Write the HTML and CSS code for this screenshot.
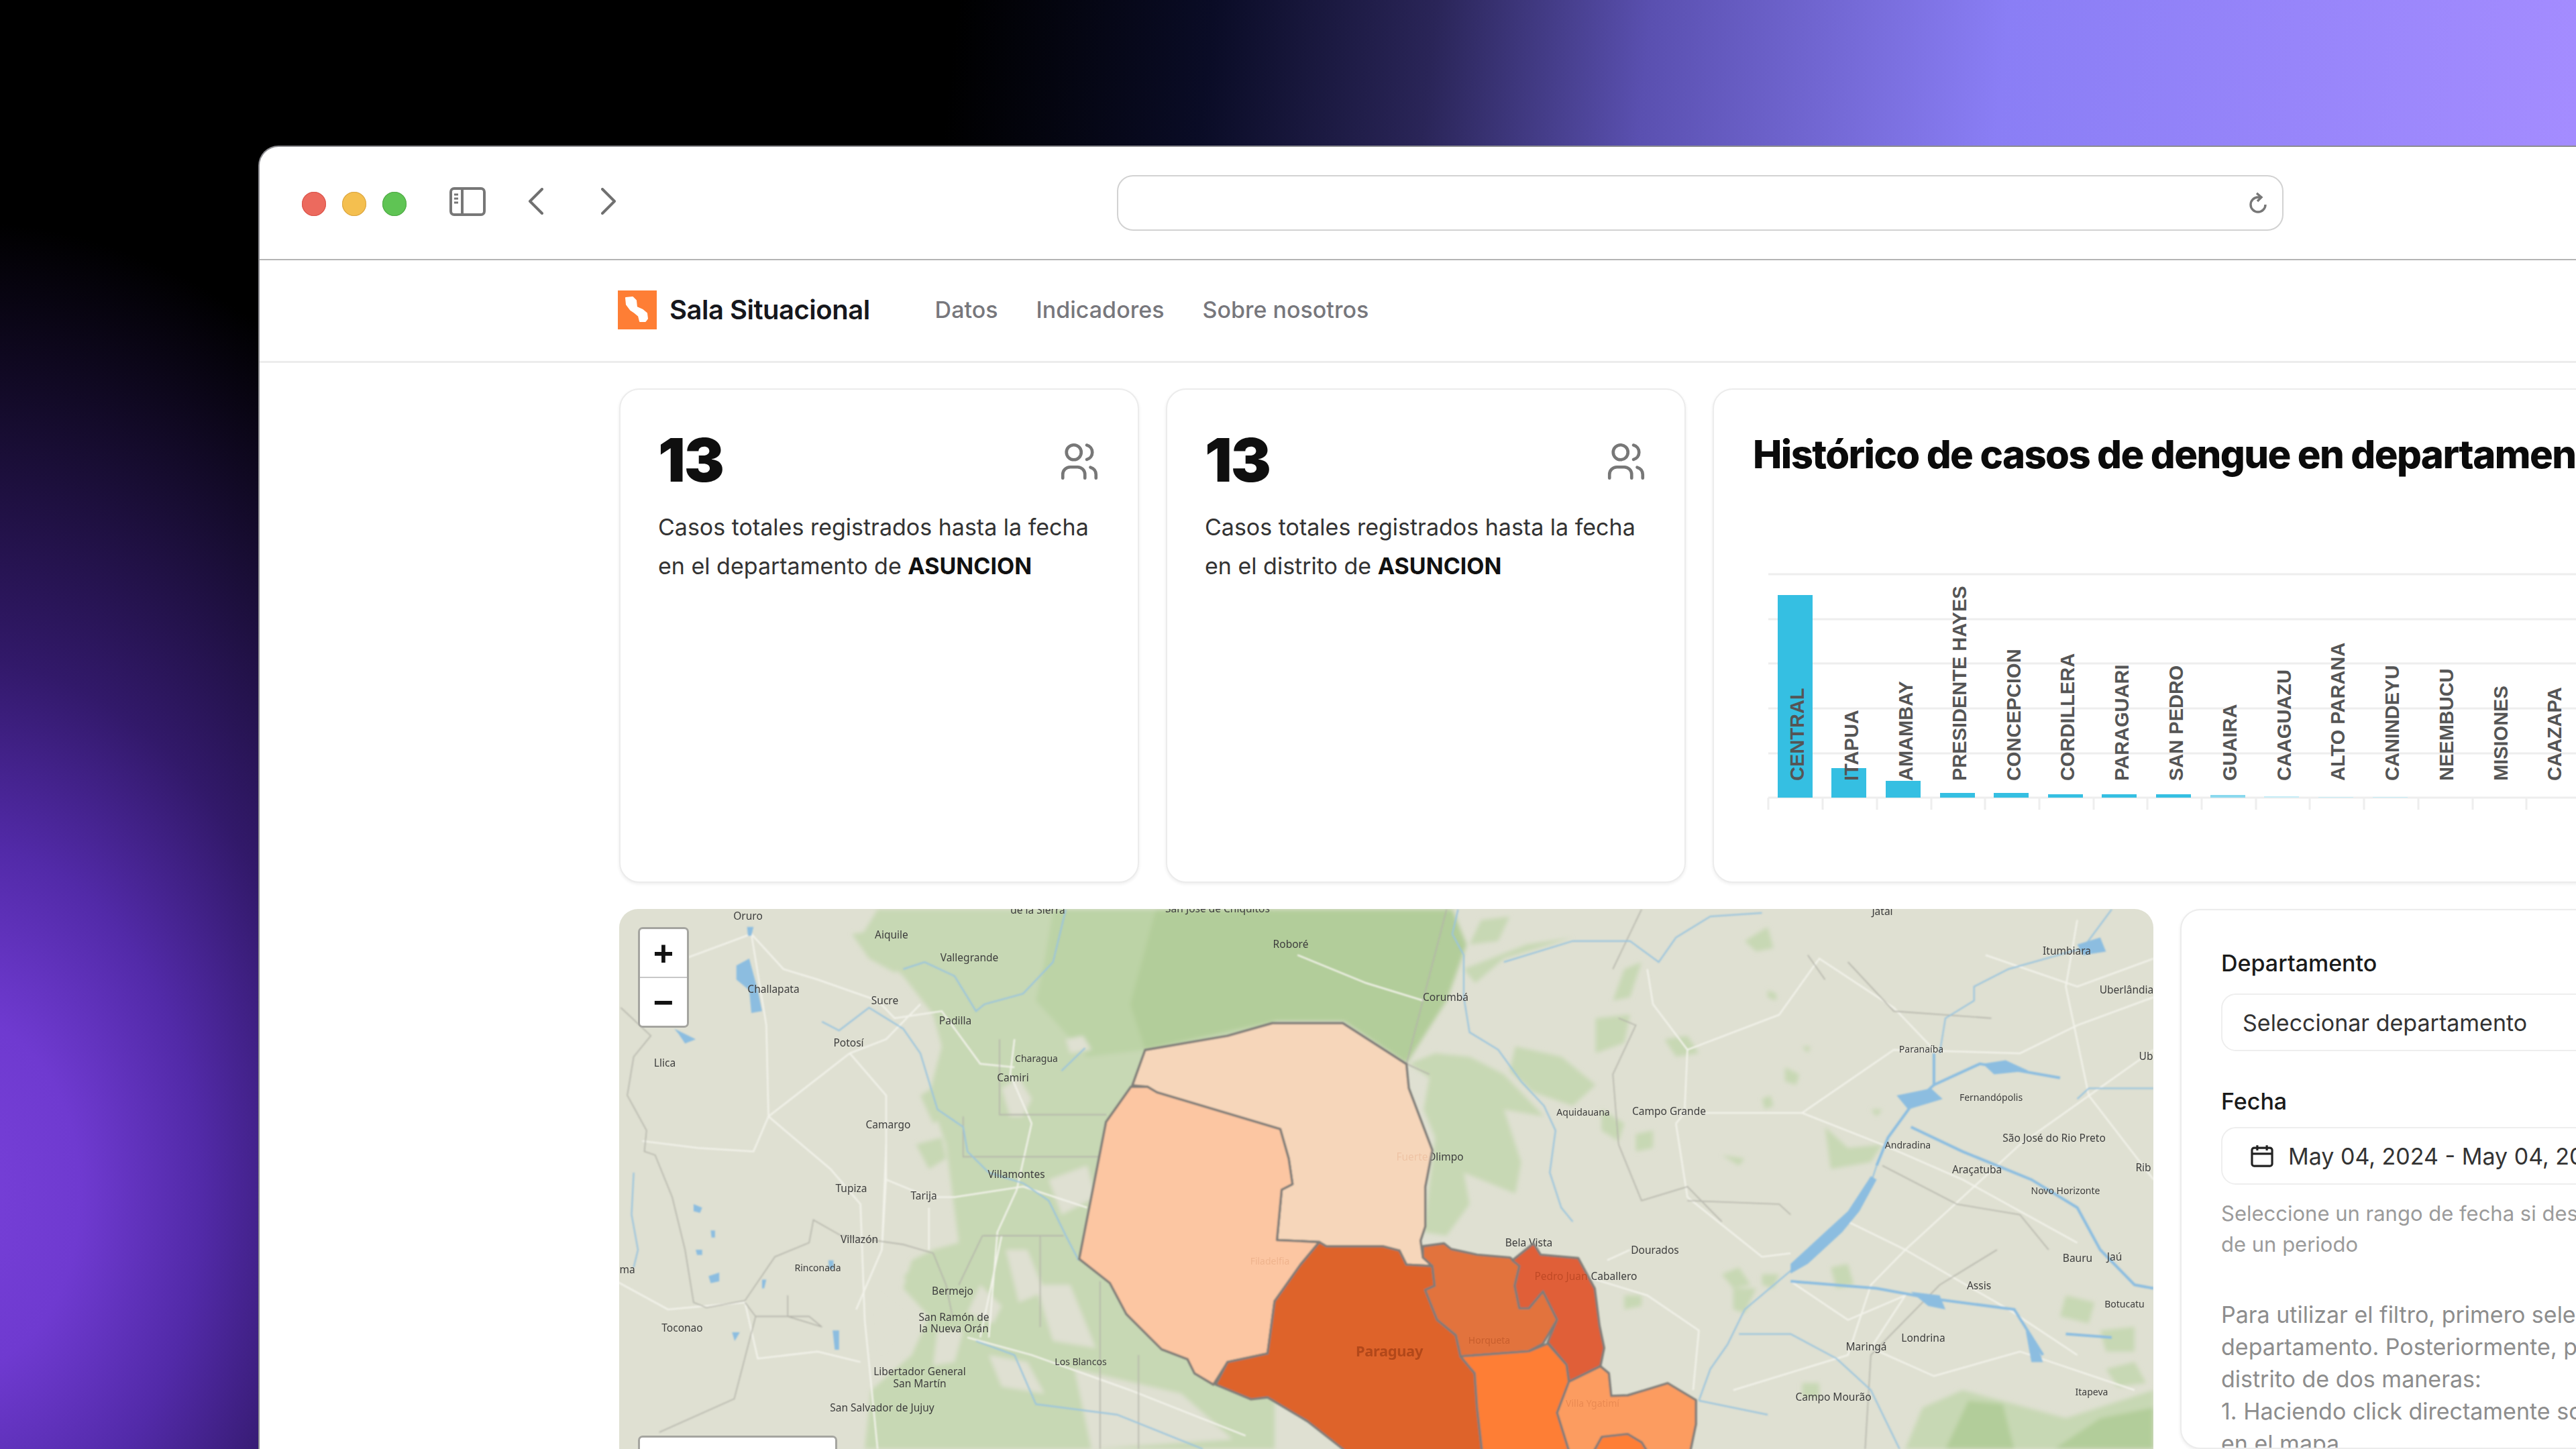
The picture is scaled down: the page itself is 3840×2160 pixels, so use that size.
FILE: index.html
```html
<!DOCTYPE html>
<html lang="es">
<head>
<meta charset="utf-8">
<title>Sala Situacional</title>
<link rel="stylesheet" href="styles.css">
</head>
<body>
<div class="window">
  <header class="toolbar">
    <div class="lights">
      <span class="light light-red"></span>
      <span class="light light-yellow"></span>
      <span class="light light-green"></span>
    </div>
    <svg class="tb-sidebar" viewBox="0 0 54 43" aria-hidden="true">
      <rect x="2" y="2" width="50" height="39" rx="5"/>
      <path d="M19 2v39"/>
      <path class="thin" d="M7 11h6M7 17h6M7 23h6"/>
    </svg>
    <svg class="tb-chev tb-back" viewBox="0 0 23 40" aria-hidden="true"><path d="M21 2 3 20l18 18"/></svg>
    <svg class="tb-chev tb-fwd" viewBox="0 0 23 40" aria-hidden="true"><path d="m2 2 18 18L2 38"/></svg>
    <div class="address">
      <svg class="reload" viewBox="0 0 28 34" aria-hidden="true">
        <path d="M24 19a11 11 0 1 1-11-11h4"/><path d="m11 2 7 6-6 6"/>
      </svg>
    </div>
  </header>

  <nav class="nav">
    <svg class="logo" viewBox="0 0 58 58" aria-hidden="true">
      <rect width="58" height="58" class="logo-bg"/>
      <path class="logo-map" d="M12 11 22 10 27 15 28 25 37 29 43 34 44 42 41 46 33 46 31 38 25 33 19 29 13 21Z"/>
    </svg>
    <span class="brand">Sala Situacional</span>
    <ul class="nav-links">
      <li>Datos</li>
      <li>Indicadores</li>
      <li>Sobre nosotros</li>
    </ul>
  </nav>

  <main class="main">
    <section class="row row-top">
      <article class="card stat">
        <div class="stat-head">
          <span class="stat-num">13</span>
          <svg class="users" viewBox="0 0 24 24" aria-hidden="true">
            <circle cx="9" cy="7" r="4"/>
            <path d="M3 21v-2a4 4 0 0 1 4-4h4a4 4 0 0 1 4 4v2"/>
            <path d="M16 3.13a4 4 0 0 1 0 7.75"/>
            <path d="M21 21v-2a4 4 0 0 0-3-3.85"/>
          </svg>
        </div>
        <p class="stat-text">Casos totales registrados hasta la fecha<br>en el departamento de <b>ASUNCION</b></p>
      </article>
      <article class="card stat">
        <div class="stat-head">
          <span class="stat-num">13</span>
          <svg class="users" viewBox="0 0 24 24" aria-hidden="true">
            <circle cx="9" cy="7" r="4"/>
            <path d="M3 21v-2a4 4 0 0 1 4-4h4a4 4 0 0 1 4 4v2"/>
            <path d="M16 3.13a4 4 0 0 1 0 7.75"/>
            <path d="M21 21v-2a4 4 0 0 0-3-3.85"/>
          </svg>
        </div>
        <p class="stat-text">Casos totales registrados hasta la fecha<br>en el distrito de <b>ASUNCION</b></p>
      </article>
      <article class="card chart-card">
        <h2 class="chart-title">Histórico de casos de dengue en departamentos</h2>
        <svg class="chart" viewBox="2556 840 1400 400" role="img" aria-label="Casos por departamento">
          <g class="grid">
            <path d="M2637 859H3956M2637 926H3956M2637 992H3956M2637 1059H3956M2637 1126H3956M2637 1192H3956"/>
            <path d="M2637 1192v18M2718 1192v18M2799 1192v18M2880 1192v18M2960 1192v18M3041 1192v18M3122 1192v18M3202 1192v18M3283 1192v18M3364 1192v18M3444 1192v18M3525 1192v18M3606 1192v18M3687 1192v18M3767 1192v18M3848 1192v18M3929 1192v18"/>
          </g>
          <g class="bars">
            <rect x="2651" y="890" width="52" height="302"/>
            <rect x="2731" y="1148" width="52" height="44"/>
            <rect x="2812" y="1167" width="52" height="25"/>
            <rect x="2893" y="1185" width="52" height="7"/>
            <rect x="2973" y="1185" width="52" height="7"/>
            <rect x="3054" y="1187" width="52" height="5"/>
            <rect x="3134" y="1187" width="52" height="5"/>
            <rect x="3215" y="1187" width="52" height="5"/>
            <rect class="faint" x="3296" y="1188" width="52" height="4"/>
            <rect class="fainter" x="3376" y="1190" width="52" height="2"/>
            <rect class="fainter" x="3457" y="1191" width="52" height="1"/>
            <rect class="fainter" x="3538" y="1191" width="52" height="1"/>
          </g>
          <g class="chart-labels">
            <text transform="translate(2690 1167) rotate(-90)">CENTRAL</text>
            <text transform="translate(2771 1167) rotate(-90)">ITAPUA</text>
            <text transform="translate(2852 1167) rotate(-90)">AMAMBAY</text>
            <text transform="translate(2932 1167) rotate(-90)">PRESIDENTE HAYES</text>
            <text transform="translate(3013 1167) rotate(-90)">CONCEPCION</text>
            <text transform="translate(3093 1167) rotate(-90)">CORDILLERA</text>
            <text transform="translate(3174 1167) rotate(-90)">PARAGUARI</text>
            <text transform="translate(3255 1167) rotate(-90)">SAN PEDRO</text>
            <text transform="translate(3335 1167) rotate(-90)">GUAIRA</text>
            <text transform="translate(3416 1167) rotate(-90)">CAAGUAZU</text>
            <text transform="translate(3496 1167) rotate(-90)">ALTO PARANA</text>
            <text transform="translate(3577 1167) rotate(-90)">CANINDEYU</text>
            <text transform="translate(3658 1167) rotate(-90)">NEEMBUCU</text>
            <text transform="translate(3739 1167) rotate(-90)">MISIONES</text>
            <text transform="translate(3819 1167) rotate(-90)">CAAZAPA</text>
          </g>
        </svg>
      </article>
    </section>

    <section class="row row-bottom">
      <div class="map">
        <svg class="map-svg" viewBox="923 1355 2287 805" preserveAspectRatio="none" aria-label="Mapa de Paraguay">
          <defs>
            <filter id="soft" x="-5%" y="-5%" width="110%" height="110%"><feGaussianBlur stdDeviation="3"/></filter>
            <filter id="softer" x="-5%" y="-5%" width="110%" height="110%"><feGaussianBlur stdDeviation="0.8"/></filter>
          </defs>
          <rect class="m-base" x="923" y="1355" width="2287" height="805"/>

          <g filter="url(#soft)">
            <!-- left area, zoom-4 coordinates -->
            <g transform="translate(900 1340) scale(.6378 .523)">
              <path class="m-g1" d="M640 30H1568V1568H610L625 1400 720 1300 760 1190 700 1110 720 1030 770 1000 830 980 800 700 760 560 790 420 770 330 700 220 600 110Z"/>
              <path class="m-g2" d="M1290 30H1568V350L1265 430 1230 300Z"/>
              <path class="m-g3" d="M1050 30H1290L1230 300 1265 430 1130 450 1010 290 1030 180Z"/>
              <path class="m-g1" d="M580 100 640 90 720 180 680 210 620 170ZM740 560l40 -30 30 80 -40 30ZM730 700l60 -20 10 60 -40 30ZM700 1080l40 -60 40 30 -10 60Z"/>
              <path class="m-base" d="M1080 400l40 -10 20 40 -50 10ZM950 620l-20 -80 40 -30 30 60 -20 50ZM1040 800l90 -40 20 90 -80 50ZM940 1000h50l40 120 -60 30ZM880 1100l50 60 -20 50 -60 -30ZM780 1230h60l-20 90 -50 10ZM900 1300l90 20 40 90 -100 -20ZM1010 1100h80l60 180 -100 -20ZM640 1130l60 60 -50 100ZM1100 1340l250 70 120 130 -330 28Z"/>
            </g>
            <!-- right area, zoom-5 coordinates -->
            <g transform="translate(1900 1340) scale(.8547 .523)">
              <path class="m-g2" d="M0 30H310L335 130 300 290 230 470 120 350H0Z"/>
              <path class="m-g1" d="M360 60l50 -10 -20 70 -50 10ZM330 200 440 130 520 110 400 170 350 240ZM235 470 270 510 260 600 280 680 260 950 300 960 340 870 330 780 420 840 430 750 400 600 470 620 400 500 340 450 280 440Z"/>
              <path class="m-g1" d="M420 420l80 30 60 80 -40 60 -70 -40 -40 -60ZM560 340l60 -10 -10 80 -50 30ZM610 200l30 -20 -20 100 -30 10ZM570 600l40 40 -10 50 -30 -30ZM630 670l30 -10 0 50 -30 10ZM680 400l40 -10 20 50 -40 10ZM960 650l40 60 60 -10 -20 50 -70 20ZM780 730l40 10 -10 20ZM780 1070l30 -20 20 50 -30 10ZM850 1070l30 0 -10 40 -20 -10ZM800 1110l40 0 -20 70 -20 -10ZM970 1050l30 -10 10 60 -30 10ZM610 1130l30 0 0 30 -30 10ZM850 570l15 -10 5 30 -15 10ZM890 480l25 20 -5 30 -20 -10ZM920 420h15l-5 20ZM1040 600h20l-10 20ZM820 120l40 -40 10 60 -30 10ZM860 260l15 10 0 20 -15 -10Z"/>
              <path class="m-g1" d="M1200 1400 1380 1480 1533 1400V1568H1100L1130 1450ZM1380 1130l50 20 -10 60 -50 -20ZM1440 1230l60 -10 0 70 -50 0ZM1450 1340l50 -20 20 60 -50 10ZM920 1380l30 0 0 40 -30 0Z"/>
              <path class="m-g2" d="M1360 1568 1440 1480 1533 1450V1568ZM1170 1568 1210 1430 1270 1440 1290 1568Z"/>
            </g>
          </g>

          <g filter="url(#softer)">
            <g transform="translate(900 1340) scale(.6378 .523)">
              <g class="m-road">
                <path d="M190 170 345 100 420 200 500 230 640 290 680 340 790 320 880 470 960 480"/>
                <path d="M385 620 575 440 660 400 740 300"/>
                <path d="M385 620 530 770 600 870 610 1200 640 1568"/>
                <path d="M90 690 220 710 350 720 385 620 380 360 345 100"/>
                <path d="M575 440 660 560 660 800 650 1000"/>
                <path d="M660 800 760 850 820 850 980 820 1130 880"/>
                <path d="M960 400 950 500 1000 640 965 830 920 950 900 1250"/>
                <path d="M850 1250 1000 1300 1230 1400 1500 1530"/>
                <path d="M760 880 760 1000M30 1090 150 1170 330 1150 360 1310 500 1290 600 1320"/>
                <path d="M660 700 650 1000 590 1170M930 960 880 1250"/>
              </g>
              <g class="m-bound">
                <path d="M40 310 110 390 70 450 55 560 100 660 95 720 120 730 160 850 190 1000 210 1150 240 1165 330 1145 400 1020 480 980 490 915 555 960 700 985 770 1010 800 1100 815 1190"/>
                <path d="M330 1150 355 1190 305 1425 130 1520"/>
                <path d="M355 1190H480L510 1220 430 1190V1130"/>
                <path d="M885 960 830 1100M885 960H1075M925 400V615H1175M840 620V735H1170"/>
                <path d="M1020 960V1220M1160 1090V1568M1250 1300V1568"/>
              </g>
              <g class="m-river">
                <path d="M1080 30 1050 180 980 270 890 300 870 320 850 280 820 220 750 180 700 200"/>
                <path d="M510 350 550 375 620 310 700 370 740 440 780 600 840 650 850 720 900 780 980 810 1040 860 1080 960 1110 1030"/>
                <path d="M870 1260 960 1300 1010 1440 1200 1470 1400 1568"/>
                <path d="M70 780 65 900 80 1000 70 1050"/>
                <path d="M1125 425 1070 490"/>
              </g>
              <path class="m-lake" d="M310 190 340 170 360 260 370 320 345 325 340 260 310 230ZM335 80h15l-5 25h-8ZM165 370 215 400 190 412 175 385ZM210 870 230 880 225 895 210 890ZM250 945h10v20h-8ZM215 1000h15v15h-12ZM245 1075 270 1065 270 1090 250 1095ZM370 1085h10l-5 25h-5ZM525 1030h12v25h-10ZM300 1235h18l-12 25ZM535 1230h15v55h-10Z"/>
            </g>
            <g transform="translate(1900 1340) scale(.8547 .523)">
              <g class="m-road">
                <path d="M40 160 160 240 260 290"/>
                <path d="M690 610H920L1060 700 1200 800 1400 980"/>
                <path d="M650 200 660 300 720 430 715 610 700 640 720 850 850 1020 900 1010"/>
                <path d="M720 430 880 330 950 170 1080 310 1150 430"/>
                <path d="M920 610 1080 430 1300 440 1400 360 1533 280"/>
                <path d="M1000 920 1100 1000 1280 1170 1400 1300"/>
                <path d="M1100 1000 1040 1100 1000 1300 800 1400"/>
                <path d="M1533 430 1300 700 1100 1000"/>
                <path d="M900 1090 1000 1200 1100 1130 1040 1280 1150 1360 1300 1290 1500 1400"/>
                <path d="M1240 160 1400 250 1533 170M1400 60 1380 250 1420 560 1533 800"/>
                <path d="M550 1080 650 1130 740 1230 730 1400M580 1030 620 1000"/>
              </g>
              <g class="m-bound">
                <path d="M300 30 230 470 270 500M640 30 590 200M600 340 630 360 590 500 600 700 640 860 720 820 780 920M1000 180 1080 320 1250 340M1060 760 1190 870 1300 900 1350 1000M720 860 880 870 900 900"/>
                <path d="M1260 1000 1160 1100 1040 1300 1030 1568M930 160 960 230"/>
              </g>
              <g class="m-river">
                <path d="M320 30 310 100 330 160 330 280 340 380 390 430 430 520 470 590 490 660 480 780 500 880 520 920"/>
                <path d="M400 180 520 120 620 120 670 180 700 110 760 50 850 40"/>
                <path d="M1460 30 1410 140 1280 200 1220 250 1220 290 1170 340 1160 440"/>
                <path class="m-river-w" d="M1150 440V530L1110 590 1070 680 1050 760"/>
                <path class="m-river-w" d="M1150 530 1230 470 1370 510"/>
                <path d="M1400 570 1420 540 1533 540"/>
                <path class="m-river-w" d="M1110 650 1200 720 1320 800 1400 880 1440 1000 1500 1100 1533 1110"/>
                <path class="m-river-w" d="M900 1090 1050 1110 1150 1140 1290 1170 1340 1300"/>
                <path class="m-river-w" d="M1380 1240 1460 1250"/>
                <path d="M1050 760 1040 810 1000 900 960 970 900 1060 820 1170 790 1270 760 1340 740 1430"/>
                <path d="M810 1240 900 1240 980 1310 1040 1400 1090 1568M740 1430 860 1470"/>
              </g>
              <path class="m-lake" d="M1040 790 1050 800 1020 890 990 950 930 1040 900 1068 900 1040 960 950 1000 890ZM1400 130l40 -20 10 40 -40 10ZM1085 560l60 -20 20 30 -60 30ZM1235 470l40 -10 40 30 -60 10ZM1310 1230l20 40 10 50 -20 0ZM1110 1120l50 10 10 40 -30 -10Z"/>
            </g>
          </g>

          <g class="m-labels">
            <text x="1115" y="1371">Oruro</text><text x="1329" y="1399">Aiquile</text><text x="1445" y="1433">Vallegrande</text><text x="1153" y="1480">Challapata</text><text x="1319" y="1497">Sucre</text><text x="1424" y="1527">Padilla</text><text x="1265" y="1560">Potosí</text><text x="991" y="1590">Llica</text><text x="1545" y="1583" class="sm">Charagua</text><text x="1510" y="1612">Camiri</text><text x="1324" y="1682">Camargo</text><text x="1515" y="1756">Villamontes</text><text x="1269" y="1777">Tupiza</text><text x="1377" y="1788">Tarija</text><text x="1281" y="1853">Villazón</text><text x="935" y="1898">ma</text><text x="1219" y="1895" class="sm">Rinconada</text><text x="1420" y="1930">Bermejo</text><text x="1017" y="1985">Toconao</text><text x="1422" y="1969">San Ramón de</text><text x="1422" y="1986">la Nueva Orán</text><text x="1611" y="2035" class="sm">Los Blancos</text><text x="1371" y="2050">Libertador General</text><text x="1371" y="2068">San Martín</text><text x="1315" y="2104">San Salvador de Jujuy</text><text x="1547" y="1362">de la Sierra</text><text x="1815" y="1360">San José de Chiquitos</text><text x="1924" y="1413">Roboré</text><text x="2155" y="1492">Corumbá</text><text x="2806" y="1364">Jataí</text><text x="3081" y="1423">Itumbiara</text><text x="3170" y="1481">Uberlândia</text><text x="2864" y="1569" class="sm">Paranaíba</text><text x="3199" y="1580">Ub</text><text x="2968" y="1641" class="sm">Fernandópolis</text><text x="2360" y="1663" class="sm">Aquidauana</text><text x="2488" y="1662">Campo Grande</text><text x="3062" y="1702">São José do Rio Preto</text><text x="2844" y="1712" class="sm">Andradina</text><text x="2947" y="1749">Araçatuba</text><text x="3195" y="1746">Rib</text><text x="3079" y="1780" class="sm">Novo Horizonte</text><text x="2279" y="1858">Bela Vista</text><text x="2467" y="1869">Dourados</text><text x="3097" y="1881">Bauru</text><text x="3152" y="1879">Jaú</text><text x="2406" y="1908">Caballero</text><text x="2950" y="1922">Assis</text><text x="3167" y="1949" class="sm">Botucatu</text><text x="2867" y="2000">Londrina</text><text x="2782" y="2013">Maringá</text><text x="3118" y="2080" class="sm">Itapeva</text><text x="2733" y="2088">Campo Mourão</text><text x="2155" y="1730">Olimpo</text>
          </g>

          <g filter="url(#softer)">
            <g class="dept" transform="translate(1500 1500) scale(.7018 .4209)">
              <path class="d-altop" d="M295 155 470 105 565 60H715L850 205 855 290 880 400 905 510 890 640 890 780 880 830 885 890 905 920 850 915 835 865 800 855H680L665 835 575 828 580 740 585 650 608 630 600 540 582 435 320 305 300 285 268 280Z"/>
              <path class="d-boq" d="M265 285H300L320 305 582 435 600 540 608 630 585 650 575 828 665 835 625 915 570 1045 555 1230 470 1260 440 1340 400 1300 385 1250 330 1215 255 1090 220 980 155 895 212 410Z"/>
              <path class="d-hayes" d="M680 850H800L835 865 850 915 905 920 910 990 890 1005 915 1110 955 1165 965 1240 995 1300 1000 1420 1010 1568V1920H900L715 1568 640 1470 555 1385 520 1392 445 1340 470 1260 555 1230 570 1045 625 915 665 835Z"/>
              <path class="d-conc" d="M885 850 930 840 945 860 1000 880 1070 890 1090 920 1080 990 1090 1070 1110 1070 1140 1010 1170 1110 1140 1195 1110 1222 965 1240 955 1165 915 1110 890 1005 910 990 905 920 885 890Z"/>
              <path class="d-amam" d="M1075 900 1120 840 1135 880 1215 892 1250 1000 1260 1130 1270 1210 1262 1275 1195 1330 1190 1270 1150 1190 1170 1110 1140 1010 1110 1070 1090 1070 1080 990 1090 920Z"/>
              <path class="d-sanp" d="M965 1240 1110 1222 1150 1195 1190 1270 1195 1330 1170 1440 1200 1600V1920H1010V1568L1000 1420 995 1300Z"/>
              <path class="d-cani" d="M1195 1330 1262 1275 1280 1300 1285 1380 1320 1378 1405 1335 1465 1395 1465 1480 1450 1600V1920H1200V1600L1170 1440Z"/>
              <path class="d-sanp" d="M1240 1600 1265 1525 1320 1515 1350 1545 1370 1600V1920H1240Z"/>
            </g>
          </g>
          <g class="m-labels">
            <text x="2071" y="2022" class="pais">Paraguay</text>
            <text x="2220" y="2003" class="l-conc">Horqueta</text>
            <text x="2374" y="2097" class="l-cani">Villa Ygatimí</text>
            <text x="1893" y="1885" class="l-boq">Filadelfia</text>
            <text x="2105" y="1730" class="l-altop">Fuerte</text>
            <text x="2327" y="1908" class="l-amam">Pedro Juan</text>
          </g>
        </svg>
        <div class="zoom-ctl">
          <span class="zoom-btn">+</span>
          <span class="zoom-btn">−</span>
        </div>
        <div class="attribution"></div>
      </div>

      <aside class="card filter">
        <label class="f-label">Departamento</label>
        <div class="field">Seleccionar departamento</div>
        <label class="f-label f-label-2">Fecha</label>
        <div class="field field-date">
          <svg class="cal" viewBox="0 0 24 24" aria-hidden="true">
            <rect x="2.5" y="4.5" width="19" height="17" rx="2"/>
            <path d="M7.5 2v5M16.5 2v5M2.5 10h19"/>
          </svg>
          May 04, 2024 - May 04, 2024
        </div>
        <p class="help">Seleccione un rango de fecha si desea ver datos<br>de un periodo</p>
        <p class="para">Para utilizar el filtro, primero seleccione un<br>departamento. Posteriormente, puede filtrar por<br>distrito de dos maneras:<br>1. Haciendo click directamente sobre el distrito<br>en el mapa.</p>
      </aside>
    </section>
  </main>
</div>
</body>
</html>
```

FILE: styles.css
```css
* { box-sizing: border-box; }
html, body { margin: 0; padding: 0; }
body {
  width: 3840px;
  height: 2160px;
  overflow: hidden;
  font-family: Inter, "Liberation Sans", sans-serif;
  color: #111;
  background:
    radial-gradient(ellipse 1000px 1450px at -60px 1780px, #7740d8 0%, #6f3ad0 18%, #522aa8 36%, #32196a 55%, #180d33 78%, rgba(10,6,20,0) 100%),
    linear-gradient(96deg, #000 1420px, #0a0c26 1800px, #2a2558 2130px, #5a50b0 2450px, #8a7ef5 2980px, #a48cff 3840px);
  padding: 217px 0 0 385px;
}

.window {
  width: 3455px;
  height: 1943px;
  background: #fff;
  border-top: 2px solid #8c8c90;
  border-left: 2px solid #8c8c90;
  border-top-left-radius: 30px;
  overflow: hidden;
  filter: blur(0.6px);
}

/* browser chrome */
.toolbar {
  height: 169px;
  display: flex;
  align-items: center;
  padding-left: 63px;
  border-bottom: 2px solid #b4b4b4;
}
.lights { display: flex; gap: 24px; margin-top: 2px; }
.light { width: 36px; height: 36px; border-radius: 50%; display: block; }
.light-red { background: #ec6a5e; box-shadow: inset 0 0 0 1px #d9534a; }
.light-yellow { background: #f4bf4f; box-shadow: inset 0 0 0 1px #d9a441; }
.light-green { background: #5fc454; box-shadow: inset 0 0 0 1px #4fa845; }

.tb-sidebar { width: 54px; height: 43px; margin-left: 64px; margin-top: -4px; fill: none; stroke: #777; stroke-width: 4; }
.tb-sidebar .thin { stroke-width: 3; }
.tb-chev { width: 23px; height: 40px; fill: none; stroke: #707070; stroke-width: 4; stroke-linecap: round; stroke-linejoin: round; margin-top: -6px; }
.tb-back { margin-left: 63px; }
.tb-fwd { margin-left: 86px; }

.address {
  width: 1739px;
  height: 83px;
  margin-left: 746px;
  border: 2px solid #d2d2d2;
  border-radius: 24px;
  display: flex;
  align-items: center;
  justify-content: flex-end;
  padding-right: 21px;
}
.reload { width: 28px; height: 34px; fill: none; stroke: #777; stroke-width: 3.4; }

/* site nav */
.nav {
  height: 153px;
  display: flex;
  align-items: center;
  padding: 0 0 3px 534px;
  border-bottom: 3px solid #ececec;
}
.logo { width: 58px; height: 58px; flex: none; }
.logo-bg { fill: #fe7e35; }
.logo-map { fill: #fff; stroke: #fff; stroke-width: 2; stroke-linejoin: round; }
.brand { margin-left: 19px; font-size: 40px; font-weight: 600; color: #16171c; letter-spacing: -0.5px; white-space: nowrap; }
.nav-links { display: flex; gap: 57px; list-style: none; margin: 0 0 0 97px; padding: 0; font-size: 34px; font-weight: 500; color: #77777c; white-space: nowrap; }

/* page */
.main { padding: 38px 0 0 536px; }
.row { display: flex; gap: 40px; width: 3300px; }
.row-top { height: 737px; }
.row-bottom { margin-top: 39px; height: 805px; }

.card {
  background: #fff;
  border: 2px solid #ececec;
  border-radius: 30px;
  box-shadow: 0 2px 5px rgba(0,0,0,.07);
  flex: none;
}
.stat { width: 775px; padding: 56px 56px 0; }
.stat-head { display: flex; justify-content: space-between; align-items: center; height: 98px; }
.stat-num { font-size: 90px; font-weight: 900; line-height: 98px; color: #0f0f0f; letter-spacing: -2px; }
.users { width: 66px; height: 66px; fill: none; stroke: #777; stroke-width: 1.7; stroke-linecap: round; stroke-linejoin: round; margin-right: -2px; margin-top: 3px; }
.stat-text { margin: 22px 0 0; font-size: 34px; line-height: 58px; color: #333; white-space: nowrap; }
.stat-text b { font-weight: 700; color: #111; }

.chart-card { width: 1400px; overflow: hidden; }
.chart-title { margin: 58px 0 0 58px; font-size: 58px; line-height: 76px; font-weight: 800; letter-spacing: -1.6px; color: #0b0b0b; white-space: nowrap; }
.chart { display: block; width: 1400px; height: 400px; margin-top: 122px; }
.grid path { fill: none; stroke: #eeeeee; stroke-width: 3; }
.bars rect { fill: #35bfe2; }
.bars .faint { fill: #8ad9ee; }
.bars .fainter { fill: #c5ecf6; }
.chart-labels text { font-family: "Liberation Sans", Arial, sans-serif; font-size: 29px; font-weight: 700; fill: #555; }

/* map */
.map { position: relative; width: 2287px; height: 805px; flex: none; border-radius: 28px 28px 0 0; overflow: hidden; }
.map-svg { display: block; width: 2287px; height: 805px; }
.m-base { fill: #dfe0d2; }
.m-g1 { fill: #c7d8b4; }
.m-g2 { fill: #b2cd9a; }
.m-g3 { fill: #bcd3a6; }
.m-road path { fill: none; stroke: #f2f2ea; stroke-width: 2.5; vector-effect: non-scaling-stroke; }
.m-bound path { fill: none; stroke: #b4b4aa; stroke-width: 1.6; vector-effect: non-scaling-stroke; }
.m-river path { fill: none; stroke: #9ac4de; stroke-width: 2.2; vector-effect: non-scaling-stroke; }
.m-river .m-river-w { stroke: #8cbde0; stroke-width: 4; }
.m-lake { fill: #8cbde0; }
.m-labels text { font-family: "Noto Sans", sans-serif; font-size: 15.5px; fill: #3d3d3d; text-anchor: middle; }
.m-labels .sm { font-size: 14px; }
.m-labels .pais { font-size: 22px; font-weight: 700; fill: #b2481a; letter-spacing: -0.4px; }
.m-labels .l-conc { fill: #c85f2e; font-size: 14px; }
.m-labels .l-cani { fill: #ea8a52; font-size: 14px; }
.m-labels .l-boq { fill: #efb48e; font-size: 14px; }
.m-labels .l-altop { fill: #efc4a5; }
.m-labels .l-amam { fill: #c04a26; }

.dept path { stroke: #7f7d78; stroke-width: 3.4; vector-effect: non-scaling-stroke; stroke-linejoin: round; }
.d-altop { fill: #f6d6ba; }
.d-boq { fill: #fcc6a2; }
.d-hayes { fill: #de642c; }
.d-conc { fill: #e2733e; }
.d-amam { fill: #e05e38; }
.d-sanp { fill: #fe7e35; }
.d-cani { fill: #fc9c60; }

.zoom-ctl {
  position: absolute;
  left: 28px;
  top: 27px;
  width: 76px;
  height: 150px;
  background: #fff;
  border: 3px solid #a5a5a0;
  border-radius: 7px;
  display: flex;
  flex-direction: column;
}
.zoom-btn {
  flex: 1;
  display: flex;
  align-items: center;
  justify-content: center;
  font-family: "Liberation Sans", sans-serif;
  font-size: 52px;
  font-weight: 700;
  color: #111;
  line-height: 1;
}
.zoom-btn + .zoom-btn { border-top: 2px solid #c8c8c8; }
.attribution {
  position: absolute;
  left: 28px;
  top: 785px;
  width: 297px;
  height: 40px;
  background: #fff;
  border: 3px solid #a5a5a0;
  border-radius: 7px;
}

/* filter panel */
.filter { width: 775px; padding: 58px 59px 0; overflow: hidden; font-size: 34px; }
.f-label { display: block; font-size: 34px; font-weight: 500; line-height: 42px; color: #1a1a1a; }
.f-label-2 { margin-top: 54px; }
.field {
  height: 86px;
  margin-top: 24px;
  width: 660px;
  border: 2px solid #eeeeee;
  border-radius: 22px;
  display: flex;
  align-items: center;
  padding-left: 30px;
  color: #333;
  white-space: nowrap;
}
.field-date { margin-top: 17px; padding-left: 40px; gap: 20px; color: #333; }
.cal { width: 38px; height: 38px; flex: none; fill: none; stroke: #222; stroke-width: 2; }
.help { margin: 20px 0 0; font-size: 31px; line-height: 46px; color: #9b9b9b; white-space: nowrap; }
.para { margin: 58px 0 0; font-size: 34px; line-height: 48px; color: #8d8d8d; white-space: nowrap; }
```
